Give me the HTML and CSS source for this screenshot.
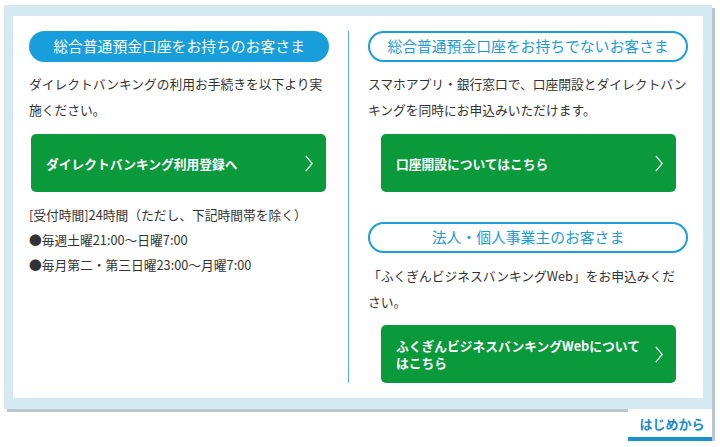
FILE: index.html
```html
<!DOCTYPE html>
<html lang="ja">
<head>
<meta charset="utf-8">
<title>ダイレクトバンキング</title>
<link rel="stylesheet" href="styles.css">
</head>
<body>
<div class="page">
  <div class="frame">
    <div class="inner">
      <section class="col col-left">
        <h2 class="pill pill-filled">総合普通預金口座をお持ちのお客さま</h2>
        <p class="lead">ダイレクトバンキングの利用お手続きを以下より実施ください。</p>
        <a class="btn btn-left" href="#">
          <span class="btn-text">ダイレクトバンキング利用登録へ</span>
          <svg class="chev" width="8" height="17" viewBox="0 0 8 17"><polyline points="0.8,0.8 7.2,8.5 0.8,16.2" fill="none" stroke="#fff" stroke-width="1.2"/></svg>
        </a>
        <p class="hours">[受付時間]24時間（ただし、下記時間帯を除く）</p>
        <ul class="list">
          <li>●毎週土曜21:00～日曜7:00</li>
          <li>●毎月第二・第三日曜23:00～月曜7:00</li>
        </ul>
      </section>
      <div class="divider"></div>
      <section class="col col-right">
        <h2 class="pill pill-outline">総合普通預金口座をお持ちでないお客さま</h2>
        <p class="lead">スマホアプリ・銀行窓口で、口座開設とダイレクトバンキングを同時にお申込みいただけます。</p>
        <a class="btn btn-right" href="#">
          <span class="btn-text">口座開設についてはこちら</span>
          <svg class="chev" width="8" height="17" viewBox="0 0 8 17"><polyline points="0.8,0.8 7.2,8.5 0.8,16.2" fill="none" stroke="#fff" stroke-width="1.2"/></svg>
        </a>
        <h2 class="pill pill-outline pill-second">法人・個人事業主のお客さま</h2>
        <p class="lead lead-second">「ふくぎんビジネスバンキングWeb」をお申込みください。</p>
        <a class="btn btn-right btn-last" href="#">
          <span class="btn-text">ふくぎんビジネスバンキングWebについてはこちら</span>
          <svg class="chev" width="8" height="17" viewBox="0 0 8 17"><polyline points="0.8,0.8 7.2,8.5 0.8,16.2" fill="none" stroke="#fff" stroke-width="1.2"/></svg>
        </a>
      </section>
    </div>
  </div>
  <div class="tab-row">
    <a class="tab" href="#">はじめから</a>
  </div>
</div>
</body>
</html>
```

FILE: styles.css
```css
* { box-sizing: border-box; }
html, body { margin: 0; padding: 0; background: #fff; }
body {
  font-family: "Noto Sans CJK JP", "Noto Sans", sans-serif;
  color: #333;
  font-size: 12.75px;
}
.page {
  width: 708px;
  margin: 5px 0 0 4px;
}
.frame {
  background: #d5e9f2;
  padding: 11px 9px;
  box-shadow: 3px 3px 0 #bcc6ca;
}
.inner {
  background: #fff;
  display: flex;
  padding: 15px 15px 15px 16px;
}
.col-left { width: 300px; flex: none; }
.col-right { width: 320px; flex: none; }
.divider {
  width: 1px;
  background: #58afd6;
  margin: 0 19px 0 19px;
  flex: none;
}
.pill {
  margin: 0;
  height: 31px;
  border-radius: 16px;
  font-size: 14.8px;
  font-weight: normal;
  display: flex;
  align-items: center;
  justify-content: center;
  line-height: 1;
}
.pill-filled {
  background: #179edb;
  color: #fff;
}
.pill-outline {
  border: 2px solid #179edb;
  color: #1c9bd6;
  background: #fff;
}
.pill-second { margin-top: 30px; }
.lead {
  margin: 9px 0 0;
  line-height: 26px;
}
.lead-second { margin-top: 10px; max-width: 312px; }
.btn {
  display: flex;
  align-items: center;
  height: 58px;
  background: #0a993b;
  border-radius: 5px;
  color: #fff;
  text-decoration: none;
  font-weight: bold;
  font-size: 12.75px;
  line-height: 17px;
  padding: 0 13px 0 15px;
  margin-top: 11px;
}
.btn-left { margin-left: 2px; margin-right: 3px; }
.btn-right { margin-left: 13px; margin-right: 12px; }
.btn-last { margin-top: 10px; }
.btn-text { flex: 1; }
.chev { flex: none; margin-left: 6px; display: block; }
.hours {
  margin: 10px 0 0;
  line-height: 25px;
}
.list {
  list-style: none;
  margin: 0;
  padding: 0;
  line-height: 25px;
}
.tab-row {
  display: flex;
  justify-content: flex-end;
}
.tab {
  position: relative;
  z-index: 1;
  width: 84px;
  height: 32px;
  background: #fff;
  border-bottom: 4px solid #1a90cf;
  box-shadow: 3px 3px 0 #bcc6ca;
  color: #1a8cca;
  font-weight: bold;
  font-size: 13px;
  text-decoration: none;
  display: flex;
  align-items: center;
  justify-content: center;
  padding-left: 4px;
}
```
